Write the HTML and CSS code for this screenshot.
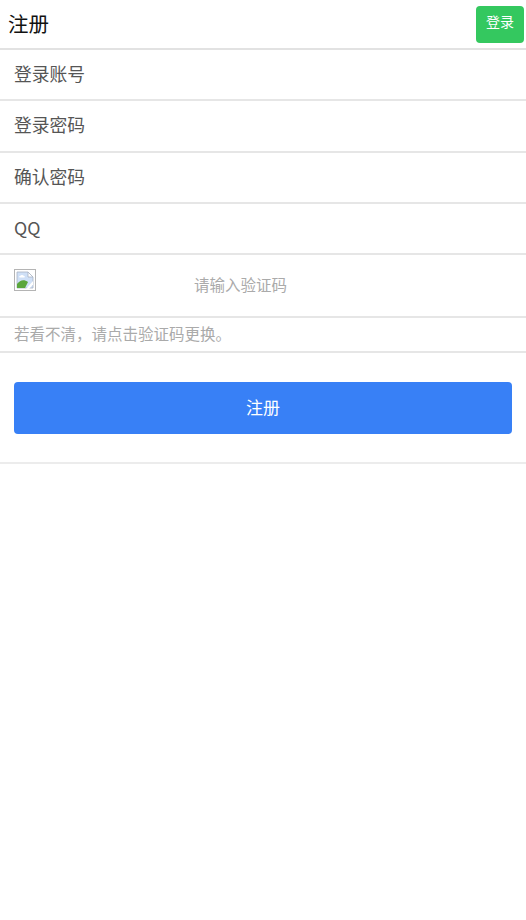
FILE: index.html
```html
<!DOCTYPE html>
<html lang="zh-CN">
<head>
  <meta charset="utf-8">
  <meta name="viewport" content="width=device-width, initial-scale=1">
  <title>注册</title>
  <link rel="stylesheet" href="styles.css">
</head>
<body>
  <header class="topbar">
    <h1>注册</h1>
    <a class="login-btn" href="#">登录</a>
  </header>
  <main>
    <div class="row">登录账号</div>
    <div class="row">登录密码</div>
    <div class="row">确认密码</div>
    <div class="row">QQ</div>
    <div class="row captcha">
      <svg class="broken-img" width="22" height="22" viewBox="0 0 22 22">
        <rect x="0.5" y="0.5" width="21" height="21" fill="#fff" stroke="#b4b4b4"/>
        <path d="M3 3h11l5 5v11H3z" fill="#cfe0f7" stroke="#a9b4c4" stroke-width="0.8"/>
        <path d="M14 3v5h5z" fill="#fff" stroke="#a9b4c4" stroke-width="0.8"/>
        <path d="M3 19v-4c3-4 7-5 11-2l-3 6z" fill="#5aa63c"/>
        <path d="M6 7c1-1.500 3-1.500 4 0 1 0 1.500 1.500 0 1.500H6c-1.500 0-1-1.500 0-1.500z" fill="#fff"/>
        <path d="M19 12l-7 8h3l4-4.500z" fill="#fff"/>
      </svg>
      <span class="captcha-hint">请输入验证码</span>
    </div>
    <div class="row tip">若看不清，请点击验证码更换。</div>
    <div class="submit-wrap">
      <button class="submit-btn" type="button">注册</button>
    </div>
  </main>
</body>
</html>
```

FILE: styles.css
```css
* {
  box-sizing: border-box;
}
body {
  margin: 0;
  background: #fff;
  font-family: "Noto Sans CJK SC", "Liberation Sans", sans-serif;
}
.topbar {
  display: flex;
  align-items: center;
  justify-content: space-between;
  height: 50px;
  padding: 0 2px 0 8px;
  border-bottom: 2px solid #e2e2e2;
}
.topbar h1 {
  margin: 0 0 3px;
  font-size: 20.500px;
  font-weight: 400;
  color: #111;
}
.login-btn {
  display: flex;
  align-items: center;
  justify-content: center;
  width: 48px;
  height: 37px;
  padding-bottom: 6px;
  border-radius: 4px;
  background: #34c85f;
  color: #fff;
  font-size: 14px;
  text-decoration: none;
}
.row {
  display: flex;
  align-items: center;
  height: 51.3px;
  padding: 0 14px 3px;
  border-bottom: 2px solid #e6e6e6;
  font-size: 17.800px;
  color: #555;
}
.captcha {
  height: 62.600px;
  align-items: flex-start;
  padding-top: 14px;
}
.broken-img {
  display: block;
}
.captcha-hint {
  margin: 4px 0 0 158px;
  font-size: 15.500px;
  color: #aaa;
}
.tip {
  height: 35px;
  padding-bottom: 3px;
  font-size: 15.500px;
  color: #aaa;
}
.submit-wrap {
  height: 111px;
  padding: 29px 14px 0;
  border-bottom: 2px solid #ececec;
}
.submit-btn {
  display: block;
  width: 100%;
  height: 52px;
  padding: 0 0 3px;
  border: 0;
  border-radius: 4px;
  background: #3880f6;
  color: #fff;
  font: inherit;
  font-size: 17px;
}
```
